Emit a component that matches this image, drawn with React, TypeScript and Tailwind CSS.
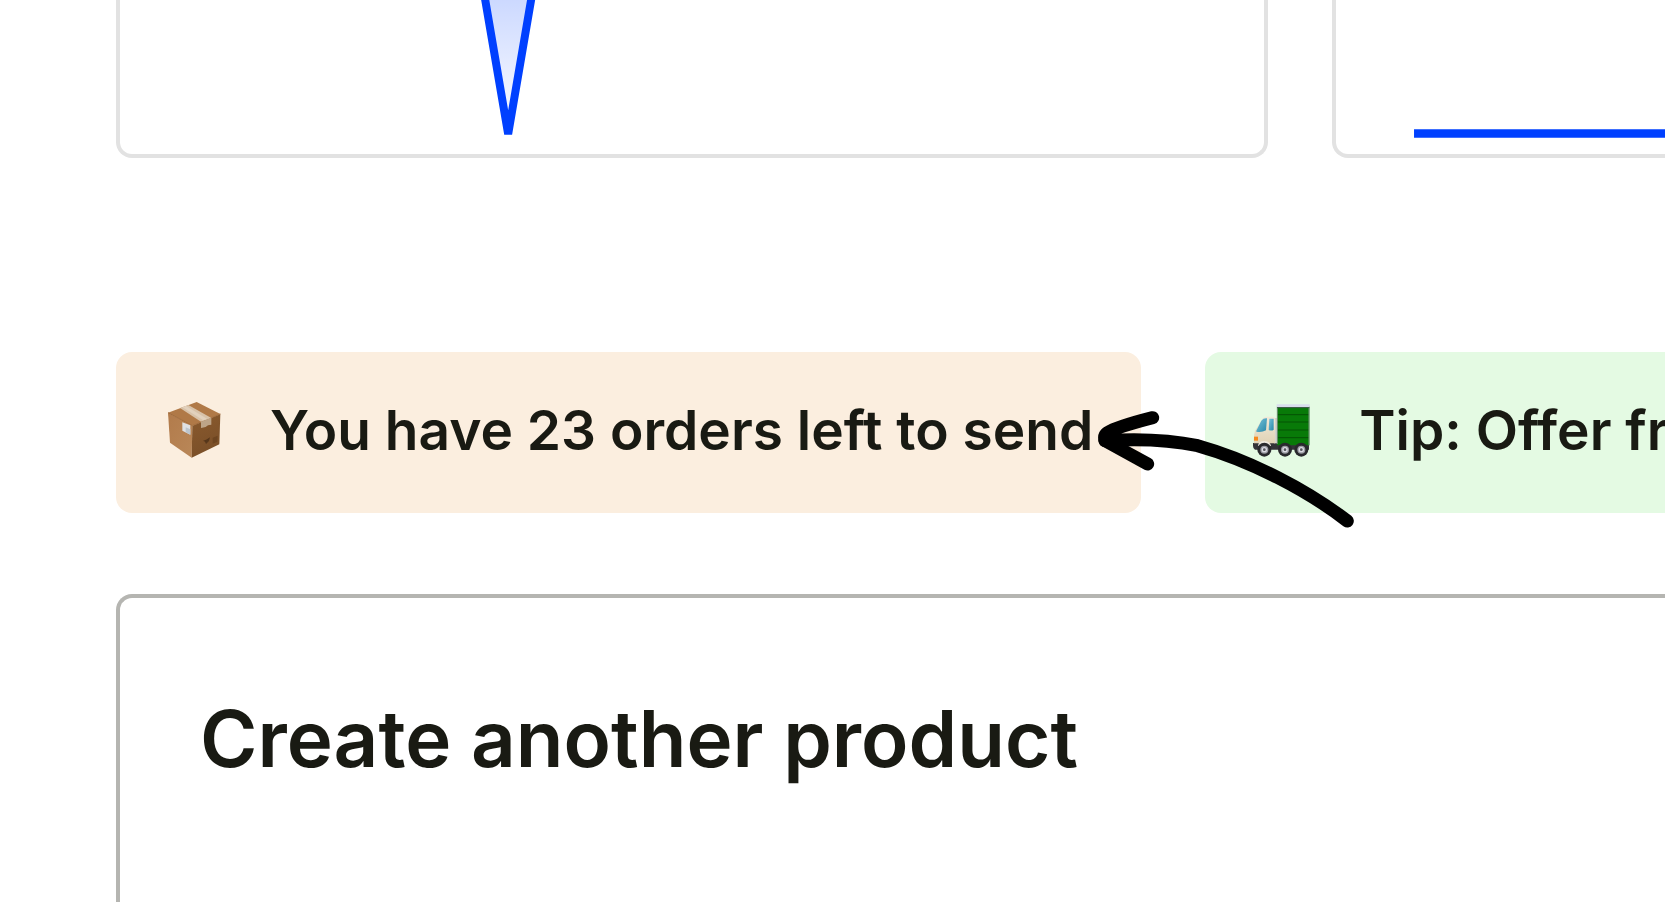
import React from 'react';

function PackageIcon() {
  return (
    <svg viewBox="192 183 174 174" className="size-[58px] shrink-0" aria-hidden="true">
      <defs>
        <linearGradient id="boxLeft" x1="0" y1="0" x2="1" y2="1">
          <stop offset="0" stopColor="#b27b4b" />
          <stop offset="1" stopColor="#b98758" />
        </linearGradient>
        <linearGradient id="boxRight" x1="0" y1="0" x2="0.3" y2="1">
          <stop offset="0" stopColor="#8a5a2e" />
          <stop offset="1" stopColor="#7a4f28" />
        </linearGradient>
      </defs>
      <path d="M204 218 L277 257 L275 353 L210 308 Z" fill="url(#boxLeft)" />
      <path d="M277 257 L361 222 L358 313 L275 353 Z" fill="url(#boxRight)" />
      <path d="M204 218 L290 186 L361 222 L277 257 Z" fill="#b07947" />
      <path d="M204 218 L277 257 L361 222" fill="none" stroke="#a06c3e" strokeWidth="3" />
      <path d="M240 204 L265 195 L334 234 L303 245 Z" fill="#d8c2a9" />
      <path d="M247 202 L258 198 L322 237 L310 241 Z" fill="#e2d1bd" />
      <path d="M303 245 L334 233 L334 254 L324 256 L317 261 L303 264 Z" fill="#bda488" />
      <path d="M247 247 L271 256 L271 284 L247 272 Z" fill="#dfe1e4" />
      <path d="M257 262 L271 268 L271 284 L257 277 Z" fill="#bcc5cd" />
      <path d="M309 302 L318 299 L330 292 L327 303 L318 312 L315 305 Z" fill="#57371b" />
      <path d="M338 293 L353 287 L352 305 L338 311 Z" fill="#6d4521" />
    </svg>
  );
}

function Wheel({ cx }: { cx: number }) {
  return (
    <g>
      <circle cx={cx} cy="329" r="21" fill="#29292d" />
      <circle cx={cx} cy="329" r="12" fill="#9b9ba3" />
      <circle cx={cx} cy="329" r="8" fill="#dcdce4" />
      <circle cx={cx} cy="329" r="4" fill="#55555c" />
    </g>
  );
}

function TruckIcon() {
  return (
    <svg viewBox="516 183 174 174" className="size-[58px] shrink-0" aria-hidden="true">
      <defs>
        <linearGradient id="cab" x1="0" y1="0" x2="0" y2="1">
          <stop offset="0" stopColor="#f1ead8" />
          <stop offset="1" stopColor="#e0d2b5" />
        </linearGradient>
        <linearGradient id="glass" x1="0" y1="0" x2="1" y2="1">
          <stop offset="0" stopColor="#78c3da" />
          <stop offset="1" stopColor="#2888a8" />
        </linearGradient>
      </defs>
      <path d="M516 309 H684 V329 H522 Q516 326 516 318 Z" fill="#333338" />
      <path d="M579 234 H589 V310 H579 Z" fill="#d5d2cf" />
      <path d="M546 234 Q550 230 558 230 H577 Q582 231 582 236 V310 H519 Q517 290 522 272 Z" fill="url(#cab)" />
      <path d="M526 272 L541 242 Q547 234 558 235 L555 271 Q542 278 526 275 Z" fill="url(#glass)" />
      <path d="M565 236 H578 V269 Q572 274 563 270 Z" fill="url(#glass)" />
      <path d="M519 290 H531 V302 H519 Z" fill="#f58a1f" />
      <path d="M531 318 Q532 303 550 303 Q568 304 570 318 Z" fill="#eee9de" />
      <path d="M588 199 H685 V316 H588 Z" fill="#087a08" />
      <path d="M589 224 H684 M589 246 H684 M589 270 H684 M589 293 H684" stroke="#045204" strokeWidth="3" />
      <path d="M589 200 V312 M684 200 V316" stroke="#74927a" strokeWidth="3" />
      <path d="M587 193 H686 V202 H587 Z" fill="#d9dcec" />
      <path d="M588 203 H685" stroke="#3e5547" strokeWidth="3" />
      <Wheel cx={550} />
      <Wheel cx={612} />
      <Wheel cx={661} />
    </svg>
  );
}

function Arrow() {
  return (
    <svg
      viewBox="51 213 768 351"
      className="absolute left-full top-[59px] z-10 -ml-[43px] h-[117px] w-[256px]"
      fill="none"
      stroke="#000"
      strokeWidth="39"
      strokeLinecap="round"
      strokeLinejoin="round"
      aria-hidden="true"
    >
      <path d="M799 543 C680 451 510 362 350 317 C268 300 166 296 72 302" />
      <path d="M215 233 C164 246 100 265 78 279 C68 286 70 294 72 302 L200 372" />
      <path d="M78 281 L110 295" />
    </svg>
  );
}

function DipChart() {
  return (
    <svg viewBox="0 0 1144 154" preserveAspectRatio="xMinYMin slice" className="h-[154px] w-full" aria-hidden="true">
      <defs>
        <linearGradient id="area" gradientUnits="userSpaceOnUse" x1="0" y1="0" x2="0" y2="134">
          <stop offset="0" stopColor="#0040ff" stopOpacity="0.2" />
          <stop offset="1" stopColor="#0040ff" stopOpacity="0" />
        </linearGradient>
      </defs>
      <path d="M365 0 L388 134 L411 0 Z" fill="url(#area)" />
      <path d="M362 -18 L388 134 L414 -18" fill="none" stroke="#0040ff" strokeWidth="8" />
    </svg>
  );
}

function FlatChart() {
  return (
    <svg viewBox="0 0 1144 154" preserveAspectRatio="xMinYMin slice" className="h-[154px] w-full" aria-hidden="true">
      <path d="M78 133.5 H1144" stroke="#0040ff" strokeWidth="8.5" />
    </svg>
  );
}

function ChartCard({ children }: { children: React.ReactNode }) {
  return (
    <div className="w-[74.4%] shrink-0 overflow-hidden rounded-b-2xl border-4 border-t-0 border-[#e2e2e2]">
      {children}
    </div>
  );
}

type NoticeProps = {
  icon: React.ReactNode;
  text: string;
  className: string;
  children?: React.ReactNode;
};

function Notice({ icon, text, className, children }: NoticeProps) {
  return (
    <div className={`relative flex shrink-0 items-center gap-12 rounded-2xl px-12 pt-[38px] pb-[43px] ${className}`}>
      {icon}
      <p className="whitespace-nowrap text-[55px] leading-[80px] font-semibold">{text}</p>
      {children}
    </div>
  );
}

export default function App() {
  return (
    <main className="flex h-screen flex-col overflow-hidden bg-white pl-29 font-['Inter',sans-serif] text-[#191a13]">
      {/* Charts */}
      <section className="flex gap-16">
        <ChartCard>
          <DipChart />
        </ChartCard>
        <ChartCard>
          <FlatChart />
        </ChartCard>
      </section>

      {/* Notices */}
      <section className="mt-[194px] flex gap-16">
        <Notice icon={<PackageIcon />} text="You have 23 orders left to send" className="bg-[#fbeedf]">
          <Arrow />
        </Notice>
        <Notice icon={<TruckIcon />} text="Tip: Offer free" className="bg-[#e4fae3]" />
      </section>

      {/* Create product */}
      <section className="mt-[81px] flex-1 rounded-tl-2xl border-t-4 border-l-4 border-[#b5b5b1] px-20 pt-[93px]">
        <h2 className="text-[78px] leading-[96px] font-semibold">Create another product</h2>
      </section>
    </main>
  );
}
